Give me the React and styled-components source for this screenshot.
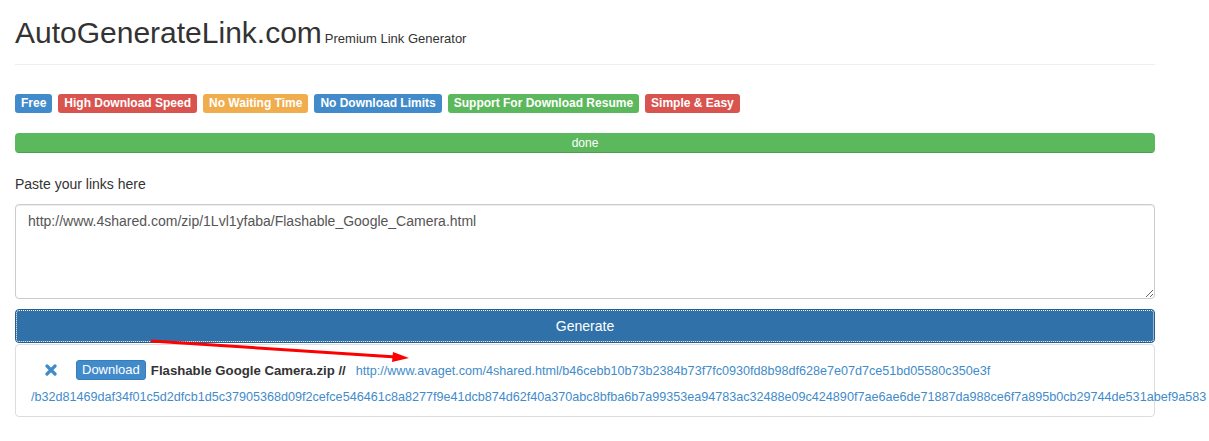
import React from 'react'
import styled, { createGlobalStyle } from 'styled-components'

const GlobalStyle = createGlobalStyle`
  html, body {
    margin: 0;
    padding: 0;
    overflow-x: hidden;
    background: #fff;
  }
  body {
    font-family: "Liberation Sans", Arial, sans-serif;
    font-size: 14px;
    line-height: 1.42857;
    color: #333;
  }
`

const Page = styled.div`
  position: relative;
  width: 1140px;
  padding: 0 15px 20px;
`

const Header = styled.div`
  padding: 16px 0 15px;
  border-bottom: 1px solid #eee;
`

const Title = styled.h1`
  margin: 0;
  height: 33px;
  font-size: 30px;
  font-weight: normal;
  line-height: 33px;
  color: #333;

  small {
    font-size: 13px;
    line-height: 1;
    color: #333;
    margin-left: 3px;
  }
`

const Labels = styled.div`
  display: flex;
  gap: 6px;
  margin-top: 29px;
`

const colors = {
  primary: '#428bca',
  danger: '#d9534f',
  warning: '#f0ad4e',
  success: '#5cb85c',
}

const Label = styled.span`
  display: inline-block;
  padding: 3px 6px 4px;
  font-size: 12px;
  font-weight: bold;
  line-height: 12px;
  color: #fff;
  white-space: nowrap;
  border-radius: 3px;
  background: ${p => colors[p.$kind]};
`

const Progress = styled.div`
  margin-top: 20px;
  height: 20px;
  border-radius: 4px;
  overflow: hidden;
  background: #f5f5f5;
`

const ProgressBar = styled.div`
  height: 100%;
  background: #5cb85c;
  box-shadow: inset 0 -1px 0 rgba(0, 0, 0, 0.15);
  color: #fff;
  font-size: 12px;
  line-height: 20px;
  text-align: center;
`

const FieldLabel = styled.label`
  display: block;
  margin-top: 21px;
  line-height: 20px;
`

const LinksInput = styled.textarea`
  display: block;
  box-sizing: border-box;
  width: 100%;
  height: 95px;
  margin-top: 10px;
  padding: 6px 12px;
  border: 1px solid #ccc;
  border-radius: 4px;
  box-shadow: inset 0 1px 1px rgba(0, 0, 0, 0.075);
  font-family: "Liberation Sans", Arial, sans-serif;
  font-size: 14px;
  line-height: 20px;
  color: #555;
  resize: vertical;
`

const GenerateButton = styled.button`
  display: block;
  box-sizing: border-box;
  width: 100%;
  height: 34px;
  margin-top: 10px;
  border: 1px solid #285e8e;
  border-radius: 4px;
  background: #3071a9;
  color: #fff;
  font-family: "Liberation Sans", Arial, sans-serif;
  font-size: 14px;
  outline: 1px dotted #fff;
  outline-offset: -2px;
`

const Result = styled.div`
  margin-top: 1px;
  padding: 13px 15px 6px;
  border: 1px solid #ddd;
  border-radius: 4px;
  line-height: 26px;
  font-size: 13px;
  white-space: nowrap;
`

const RemoveIcon = styled.svg`
  display: inline-block;
  width: 12px;
  height: 12px;
  margin: 0 19px 0 14px;
  vertical-align: -1px;
`

const DownloadButton = styled.span`
  display: inline-block;
  box-sizing: border-box;
  height: 20px;
  padding: 0 5px;
  border: 1px solid #357ebd;
  border-radius: 3px;
  background: #428bca;
  color: #fff;
  font-size: 13px;
  line-height: 18px;
  vertical-align: 1px;
`

const FileName = styled.b`
  margin-left: 5px;
  font-size: 13.2px;
  color: #333;
`

const Link = styled.a`
  margin-left: 10px;
  color: #428bca;
  font-size: 12.6px;
  text-decoration: none;
`

const Arrow = styled.svg`
  position: absolute;
  left: 0;
  top: 0;
  width: 420px;
  height: 370px;
  pointer-events: none;
`

const badges = [
  ['Free', 'primary'],
  ['High Download Speed', 'danger'],
  ['No Waiting Time', 'warning'],
  ['No Download Limits', 'primary'],
  ['Support For Download Resume', 'success'],
  ['Simple & Easy', 'danger'],
]

const linkStart = 'http://www.avaget.com/4shared.html/b46cebb10b73b2384b73f7fc0930fd8b98df628e7e07d7ce51bd05580c350e3f'
const linkEnd = '/b32d81469daf34f01c5d2dfcb1d5c37905368d09f2cefce546461c8a8277f9e41dcb874d62f40a370abc8bfba6b7a99353ea94783ac32488e09c424890f7ae6ae6de71887da988ce6f7a895b0cb29744de531abef9a583'

export default function App() {
  return (
    <>
      <GlobalStyle />
      <Page>
        <Header>
          <Title>AutoGenerateLink.com<small>Premium Link Generator</small></Title>
        </Header>

        <Labels>
          {badges.map(([text, kind]) => (
            <Label key={text} $kind={kind}>{text}</Label>
          ))}
        </Labels>

        <Progress>
          <ProgressBar style={{ width: '100%' }}>done</ProgressBar>
        </Progress>

        <FieldLabel htmlFor="links">Paste your links here</FieldLabel>
        <LinksInput
          id="links"
          defaultValue="http://www.4shared.com/zip/1Lvl1yfaba/Flashable_Google_Camera.html"
        />

        <GenerateButton>Generate</GenerateButton>

        <Result>
          <RemoveIcon viewBox="0 0 12 12">
            <path d="M2 2 L10 10 M10 2 L2 10" stroke="#428bca" strokeWidth="3.2" strokeLinecap="round" />
          </RemoveIcon>
          <DownloadButton>Download</DownloadButton>
          <FileName>Flashable Google Camera.zip //</FileName>
          <Link href="#">
            {linkStart}
            <br />
            {linkEnd}
          </Link>
        </Result>

        <Arrow viewBox="0 0 420 370">
          <line x1="151" y1="341" x2="396" y2="357" stroke="#f00" strokeWidth="3" />
          <polygon points="409,358 393,352 392,362" fill="#f00" />
        </Arrow>
      </Page>
    </>
  )
}
